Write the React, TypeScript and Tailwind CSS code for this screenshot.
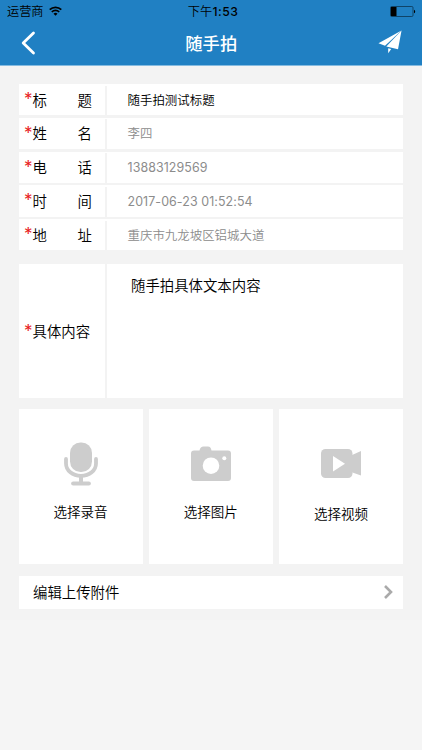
import clsx from 'clsx';

const fields = [
  { label: ['标', '题'], value: '随手拍测试标题', editable: true },
  { label: ['姓', '名'], value: '李四' },
  { label: ['电', '话'], value: '13883129569', numeric: true },
  { label: ['时', '间'], value: '2017-06-23 01:52:54', numeric: true },
  { label: ['地', '址'], value: '重庆市九龙坡区铝城大道' },
];

const MicIcon = () => (
  <svg className="w-[34px] h-[44px]" viewBox="0 0 34 44" fill="none">
    <rect x="6" y="0.5" width="22" height="29.5" rx="10.5" fill="#cdcdcd" />
    <path d="M2 17v4.5c0 7 6.500 12.300 15 12.300s15-5.300 15-12.300V17" stroke="#cdcdcd" strokeWidth="3.8" strokeLinecap="round" />
    <path d="M17 34v8" stroke="#cdcdcd" strokeWidth="4" />
    <path d="M9.2 41.500h15.600" stroke="#cdcdcd" strokeWidth="4.200" strokeLinecap="round" />
  </svg>
);

const CameraIcon = () => (
  <svg className="w-[40px] h-[35px]" viewBox="0 0 40 35">
    <path
      d="M3 4.500h5.500C9 2 10.500.5 12.500.5h4.500C19 .5 20 2 20.500 4.500H37a3 3 0 0 1 3 3V32a3 3 0 0 1-3 3H3a3 3 0 0 1-3-3V7.500a3 3 0 0 1 3-3z"
      fill="#cdcdcd"
    />
    <circle cx="20" cy="19.700" r="8.300" fill="#fff" />
    <circle cx="33.300" cy="12.300" r="2" fill="#fff" />
  </svg>
);

const VideoIcon = () => (
  <svg className="w-[40px] h-[29px]" viewBox="0 0 40 29">
    <rect width="31.500" height="29" rx="4.500" fill="#cdcdcd" />
    <path d="M30 6.500 40 2v24.500L30 23z" fill="#cdcdcd" />
    <path d="M12 7v15.500l12-7.800z" fill="#fff" />
  </svg>
);

const attachments = [
  { text: '选择录音', icon: <MicIcon />, iconPad: 'pt-[32.500px]', textGap: 'mt-[16px]' },
  { text: '选择图片', icon: <CameraIcon />, iconPad: 'pt-[37px]', textGap: 'mt-[21px]' },
  { text: '选择视频', icon: <VideoIcon />, iconPad: 'pt-[40px]', textGap: 'mt-[26px]' },
];

const StatusBar = () => (
  <div className="grid grid-cols-3 items-center h-[22px] pl-[7px] pr-[6px] text-black">
    <div className="flex items-center gap-[5px]">
      <span className="pt-[2px] text-[12.200px] leading-none">运营商</span>
      <svg className="w-[13px] h-[10px]" viewBox="0 0 13 10" fill="none" stroke="#000" strokeWidth="1.700">
        <path d="M.7 3.700a8.200 8.200 0 0 1 11.600 0" />
        <path d="M2.800 6a5.200 5.200 0 0 1 7.400 0" />
        <path d="M6.500 9.700 4.500 7.700a2.900 2.900 0 0 1 4 0z" fill="#000" stroke="none" />
      </svg>
    </div>
    <span className="pt-[2px] pl-[3px] text-center text-[12.200px] leading-none tracking-[0.200px]">
      下午<span className="font-medium tracking-[0.500px]">1:53</span>
    </span>
    <svg className="w-[26px] h-[11px] justify-self-end" viewBox="0 0 26 11">
      <rect x="0.500" y="0.500" width="22.500" height="10" rx="1.200" fill="none" stroke="#0b3551" strokeWidth="0.800" />
      <rect x="1" y="1" width="5.500" height="9" fill="#000" />
      <path d="M24 3.700c1.600.5 1.600 3.100 0 3.600z" fill="#000" />
    </svg>
  </div>
);

const Header = () => (
  <header className="h-[66px] bg-[#2080c3] border-b border-[#85bbe0]">
    <StatusBar />
    <div className="grid grid-cols-3 items-center h-[42px] pl-[21px] pr-[20.500px]">
      <svg className="w-[15px] h-[24px]" viewBox="0 0 15 24" fill="none">
        <path d="M12.500 2 2.200 12l10.300 10" stroke="#fff" strokeWidth="2.800" strokeLinecap="round" strokeLinejoin="round" />
      </svg>
      <h1 className="pt-px text-center text-[17.300px] leading-none font-medium text-white">随手拍</h1>
      <svg className="w-[24px] h-[24px] -mt-[3px] justify-self-end" viewBox="0 0 24 24" fill="#fff">
        <path d="M23.500.5.500 13.200l6.500 2.600z" />
        <path d="M23.500.5 8.300 16.400 20 19.300z" />
        <path d="M10.200 18.200v5l3-4.200z" />
      </svg>
    </div>
  </header>
);

const Star = () => <span className="w-[8.500px] -ml-[0.500px] font-normal text-[#e8201c] text-[17px] leading-none">*</span>;

export default function App() {
  return (
    <div className="w-[422px] h-[750px] overflow-hidden bg-[#f5f5f5] text-black font-[350] [font-family:Inter,'Noto_Sans_CJK_SC',sans-serif]">
      <Header />
      <main className="h-[554px] bg-[#f3f3f3] pt-[18px] pl-[18.500px] pr-[19px]">
        {/* Form fields */}
        <div className="flex flex-col gap-[2.500px]">
          {fields.map((field) => (
            <div key={field.value} className="flex h-[31.250px] bg-white">
              <div className="flex items-center w-[86.500px] pl-[6px] pr-[13px] text-[14.400px]">
                <Star />
                <div className="flex flex-1 justify-between pt-[2.500px] leading-none">
                  <span>{field.label[0]}</span>
                  <span>{field.label[1]}</span>
                </div>
              </div>
              <div className="w-[2px] mt-[1.500px] bg-[#f3f3f3]" />
              <div
                className={clsx(
                  'flex flex-1 items-center pl-[20.500px] pt-[2.500px] text-[12.450px] leading-none',
                  field.editable ? 'text-black' : 'text-[#8c8c8c]',
                  field.numeric && 'font-normal tracking-[0.080px]'
                )}
              >
                {field.value}
              </div>
            </div>
          ))}
        </div>

        {/* Content */}
        <div className="flex h-[134.500px] mt-[13.700px] bg-white text-[14.400px]">
          <div className="flex items-center w-[86.500px] pl-[6px] leading-none">
            <Star />
            <span className="pt-[2px]">具体内容</span>
          </div>
          <div className="w-[2px] bg-[#f3f3f3]" />
          <p className="flex-1 pl-[24px] pt-[14px] leading-[16px]">随手拍具体文本内容</p>
        </div>

        {/* Attachment pickers */}
        <div className="grid grid-cols-3 gap-[6px] mt-[11px]">
          {attachments.map((item) => (
            <div key={item.text} className={clsx('flex flex-col items-center h-[155px] bg-white', item.iconPad)}>
              {item.icon}
              <span className={clsx('text-[13.500px] leading-[20px]', item.textGap)}>{item.text}</span>
            </div>
          ))}
        </div>

        <div className="flex items-center justify-between h-[33px] mt-[11.500px] pl-[14.500px] pr-[10.500px] bg-white">
          <span className="pt-[2px] text-[14.400px] leading-none">编辑上传附件</span>
          <svg className="w-[9px] h-[14px]" viewBox="0 0 9 14" fill="none">
            <path d="M1 1l6 6-6 6" stroke="#aaa" strokeWidth="2.600" />
          </svg>
        </div>
      </main>
    </div>
  );
}
